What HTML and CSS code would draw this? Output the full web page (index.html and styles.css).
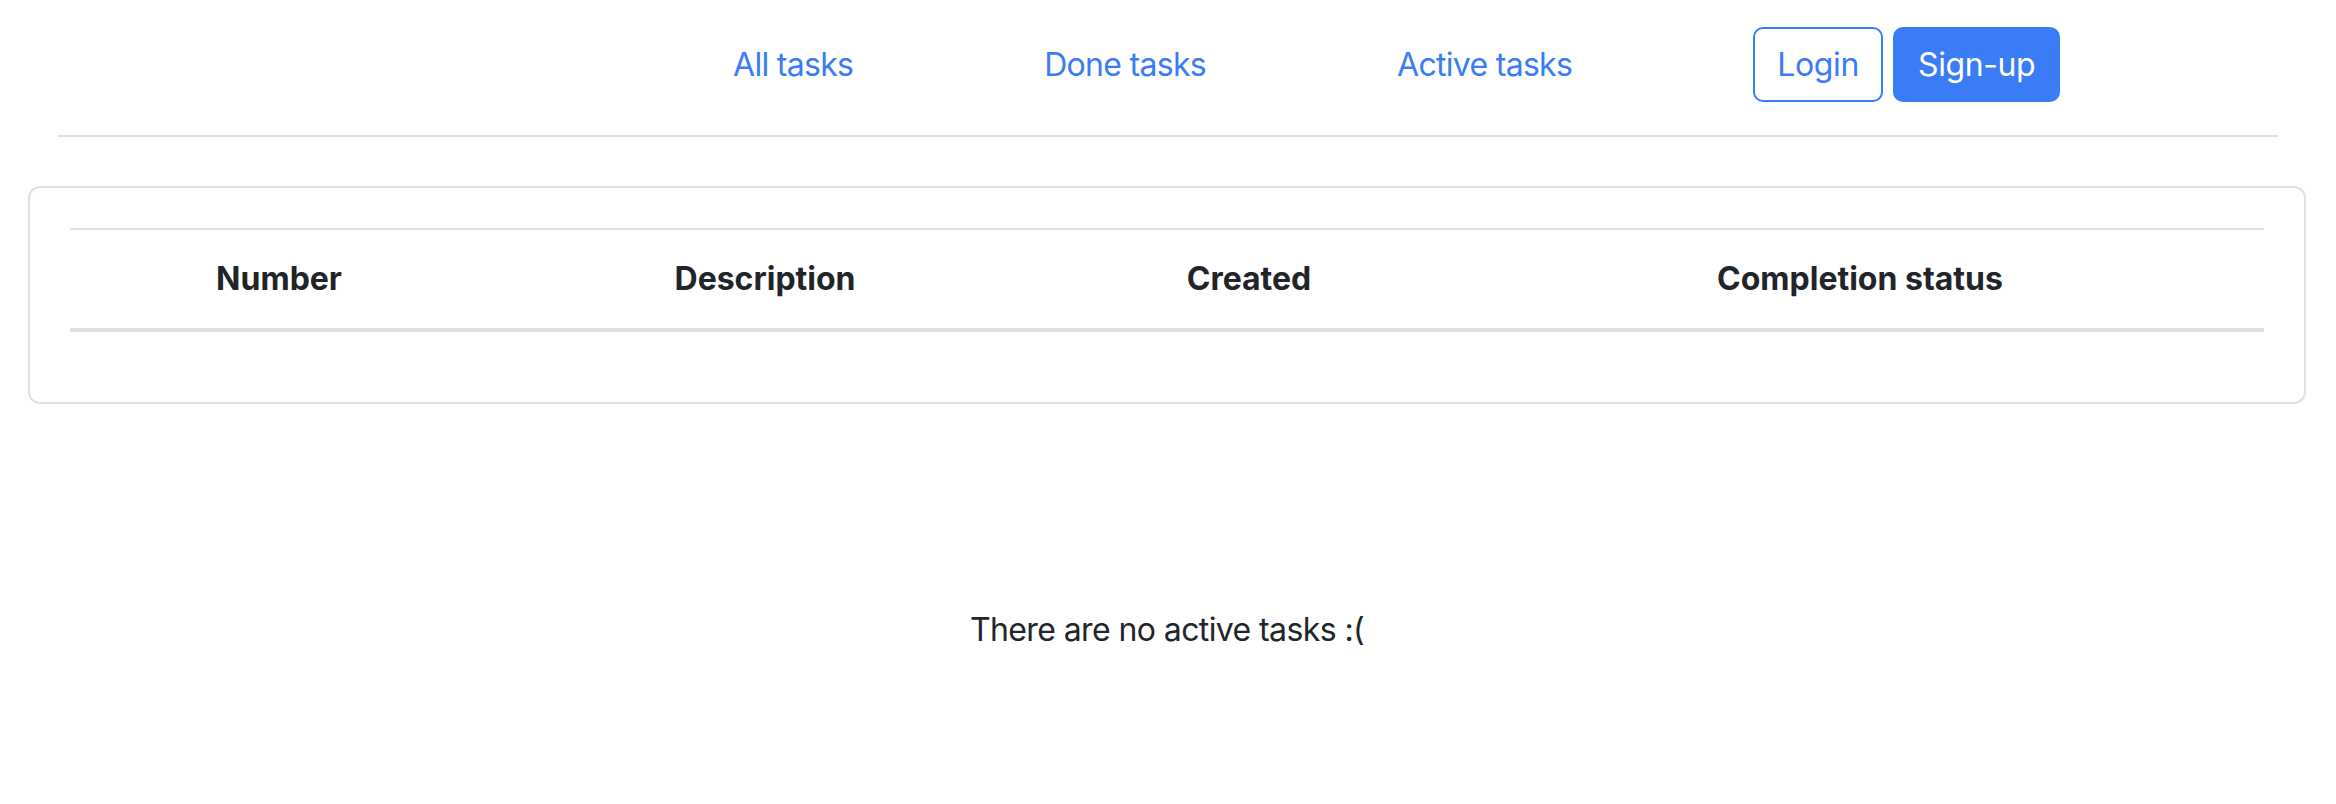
FILE: index.html
```html
<!DOCTYPE html>
<html lang="en">
<head>
<meta charset="utf-8">
<title>Tasks</title>
<link rel="stylesheet" href="styles.css">
</head>
<body>
<header class="topbar">
  <nav class="nav">
    <a class="nav-link" href="#">All tasks</a>
    <a class="nav-link" href="#">Done tasks</a>
    <a class="nav-link" href="#">Active tasks</a>
  </nav>
  <div class="auth">
    <button class="btn btn-outline">Login</button>
    <button class="btn btn-primary">Sign-up</button>
  </div>
</header>
<main class="main">
  <section class="card">
    <table class="tasks">
      <colgroup>
        <col class="c1"><col class="c2"><col class="c3"><col class="c4">
      </colgroup>
      <thead>
        <tr>
          <th>Number</th>
          <th>Description</th>
          <th>Created</th>
          <th>Completion status</th>
        </tr>
      </thead>
      <tbody></tbody>
    </table>
  </section>
  <p class="empty">There are no active tasks :(</p>
</main>
</body>
</html>
```
FILE: styles.css
```css
* { box-sizing: border-box; }
html, body { margin: 0; padding: 0; background: #fff; }
body {
  font-family: Inter, "Noto Sans", "Liberation Sans", sans-serif;
  font-size: 32px;
  color: #212529;
  width: 2336px;
}
.topbar {
  margin: 0 58px;
  padding: 27px 0 33px 675px;
  display: flex;
  align-items: center;
  border-bottom: 2px solid #dfe0e3;
}
.nav { display: flex; gap: 191px; }
.nav-link {
  color: #3a7cf6;
  text-decoration: none;
  line-height: 48px;
  letter-spacing: -0.7px;
}
.auth { display: flex; gap: 10px; margin-left: 181px; }
.btn {
  font: inherit;
  font-size: 32px;
  line-height: 48px;
  height: 75px;
  padding: 0;
  border-radius: 10px;
  border: 2px solid #3a7cf6;
  white-space: nowrap;
  letter-spacing: -0.4px;
  cursor: pointer;
}
.btn-outline { background: #fff; color: #3a7cf6; width: 130px; }
.btn-primary { background: #3a7cf6; color: #fff; width: 167px; }
.main { padding: 49px 30px 0 28px; }
.card {
  border: 2px solid #dfe0e3;
  border-radius: 12px;
  padding: 40px 40px 38px 40px;
}
.tasks {
  width: 100%;
  table-layout: fixed;
  border-collapse: collapse;
  border-top: 2px solid #dfe0e3;
}
.c1 { width: 418px; }
.c2 { width: 554px; }
.c3 { width: 414px; }
.c4 { width: auto; }
.tasks th {
  font-weight: 700;
  text-align: center;
  line-height: 48px;
  padding: 25px 16px;
  border-bottom: 4px solid #dfe0e3;
}
.tasks tbody { height: 32px; }
.empty {
  text-align: center;
  margin: 202px 0 0 0;
  line-height: 48px;
  letter-spacing: -0.6px;
}
```
